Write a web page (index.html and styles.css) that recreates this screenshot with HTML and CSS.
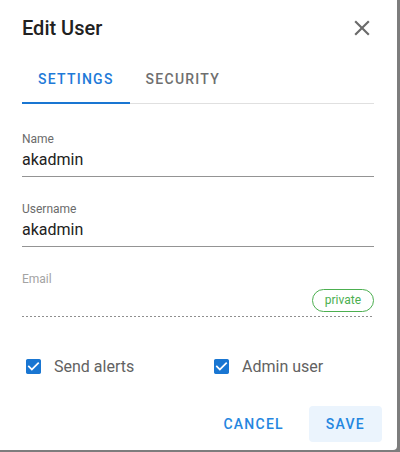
FILE: index.html
```html
<!DOCTYPE html>
<html lang="en">
<head>
<meta charset="utf-8">
<title>Edit User</title>
<link rel="stylesheet" href="styles.css">
</head>
<body>
<div class="dialog">
  <div class="header">
    <h2 class="title">Edit User</h2>
    <svg class="close" viewBox="0 0 24 24" aria-label="Close"><path d="M19 6.41L17.59 5 12 10.59 6.41 5 5 6.41 10.59 12 5 17.59 6.41 19 12 13.41 17.59 19 19 17.590 13.41 12z"/></svg>
  </div>
  <div class="tabs">
    <div class="tab active">Settings</div>
    <div class="tab">Security</div>
  </div>
  <div class="fields">
    <div class="field">
      <div class="label">Name</div>
      <div class="value">akadmin</div>
    </div>
    <div class="field">
      <div class="label">Username</div>
      <div class="value">akadmin</div>
    </div>
    <div class="field disabled">
      <div class="label">Email</div>
      <div class="value"><span class="chip">private</span></div>
    </div>
  </div>
  <div class="checks">
    <label class="check"><svg class="box" viewBox="3 3 18 18"><path d="M19 3H5c-1.11 0-2 .9-2 2v14c0 1.1.89 2 2 2h14c1.11 0 2-.9 2-2V5c0-1.1-.89-2-2-2zm-9 14l-5-5 1.41-1.41L10 14.17l7.590-7.59L19 8l-9 9z"/></svg><span>Send alerts</span></label>
    <label class="check"><svg class="box" viewBox="3 3 18 18"><path d="M19 3H5c-1.11 0-2 .9-2 2v14c0 1.1.89 2 2 2h14c1.11 0 2-.9 2-2V5c0-1.1-.89-2-2-2zm-9 14l-5-5 1.41-1.41L10 14.17l7.590-7.59L19 8l-9 9z"/></svg><span>Admin user</span></label>
  </div>
  <div class="actions">
    <button class="btn">Cancel</button>
    <button class="btn primary">Save</button>
  </div>
</div>
</body>
</html>
```

FILE: styles.css
```css
* { box-sizing: border-box; }
html, body { margin: 0; padding: 0; }
body {
  background: #7d7d7d;
  width: 400px;
  height: 452px;
  font-family: Roboto, "Noto Sans", sans-serif;
}
.dialog {
  width: 397px;
  height: 450px;
  background: #fff;
  border-radius: 0 0 4px 0;
  padding: 12px 23px 0 22px;
  display: flex;
  flex-direction: column;
}
.header {
  height: 32px;
  display: flex;
  align-items: center;
  justify-content: space-between;
}
.title {
  margin: 0;
  font-size: 20px;
  line-height: 32px;
  font-weight: 500;
  color: #212121;
}
.close {
  width: 26px;
  height: 26px;
  fill: #6b6b6b;
  margin-right: -1px;
}
.tabs {
  margin-top: 12px;
  display: flex;
  border-bottom: 1px solid #e0e0e0;
}
.tab {
  position: relative;
  height: 47px;
  line-height: 47px;
  padding: 0 16px;
  font-size: 14px;
  font-weight: 500;
  letter-spacing: 1.25px;
  text-transform: uppercase;
  color: #6f6f6f;
}
.tab.active { color: #1e7ad8; }
.tab.active::after {
  content: "";
  position: absolute;
  left: 0;
  right: 0;
  bottom: -1px;
  height: 2px;
  background: #1976d2;
}
.fields {
  margin-top: 27px;
  display: flex;
  flex-direction: column;
  gap: 24px;
}
.field {
  border-bottom: 1px solid #949494;
  padding-bottom: 4px;
}
.field.disabled {
  border-bottom: 0;
  padding-bottom: 5px;
  background: repeating-linear-gradient(90deg, #8f8f8f 0 2px, transparent 2px 4px) left bottom / 100% 1px no-repeat;
}
.label {
  font-size: 12px;
  line-height: 16px;
  color: #6b6b6b;
}
.disabled .label { color: #a3a3a3; }
.value {
  margin-top: 1px;
  height: 24px;
  font-size: 16px;
  line-height: 24px;
  color: #212121;
  display: flex;
  align-items: center;
  justify-content: flex-end;
}
.field:not(.disabled) .value { justify-content: flex-start; }
.chip {
  height: 23px;
  line-height: 21px;
  padding: 0 12px;
  border: 1px solid #4caf50;
  border-radius: 12px;
  font-size: 12px;
  color: #4caf50;
}
.checks {
  margin-top: 37px;
  display: grid;
  grid-template-columns: 188px 1fr;
  padding-left: 4px;
}
.check {
  display: flex;
  align-items: center;
  height: 24px;
  font-size: 16px;
  color: #626262;
}
.box {
  width: 15px;
  height: 15px;
  fill: #1976d2;
  margin-right: 13px;
}
.actions {
  margin-top: 28px;
  display: flex;
  justify-content: flex-end;
  gap: 8px;
  margin-right: -8px;
}
.btn {
  height: 36px;
  padding: 0 17px;
  border: 0;
  border-radius: 4px;
  background: transparent;
  font-family: Roboto, "Noto Sans", sans-serif;
  font-size: 14px;
  font-weight: 500;
  letter-spacing: 1.25px;
  text-transform: uppercase;
  color: #2486e0;
}
.btn.primary { background: #ebf4fd; }
```
